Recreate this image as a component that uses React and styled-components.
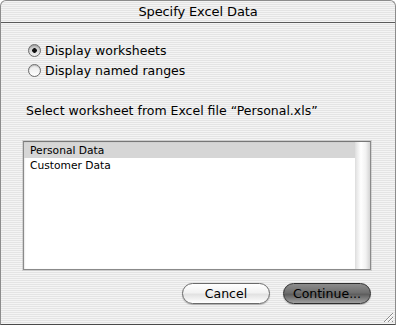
import React, { useState } from "react";
import styled, { createGlobalStyle } from "styled-components";

const GlobalStyle = createGlobalStyle`
  html, body {
    margin: 0;
    padding: 0;
    background: #ffffff;
  }
  * {
    box-sizing: border-box;
  }
`;

const sheets = ["Personal Data", "Customer Data"];

const App = () => {
  const [mode, setMode] = useState("worksheets");
  const [selected, setSelected] = useState(0);

  return (
    <>
      <GlobalStyle />
      <Window>
        <TitleBar>Specify Excel Data</TitleBar>
        <Body>
          <RadioGroup>
            <RadioRow onClick={() => setMode("worksheets")}>
              <Radio checked={mode === "worksheets"} />
              Display worksheets
            </RadioRow>
            <RadioRow onClick={() => setMode("ranges")}>
              <Radio checked={mode === "ranges"} />
              Display named ranges
            </RadioRow>
          </RadioGroup>
          <Prompt>Select worksheet from Excel file “Personal.xls”</Prompt>
          <ListBox>
            <Rows>
              {sheets.map((name, i) => (
                <Row key={name} active={i === selected} onClick={() => setSelected(i)}>
                  {name}
                </Row>
              ))}
            </Rows>
            <ScrollTrack />
          </ListBox>
          <Buttons>
            <Button>Cancel</Button>
            <Button primary>Continue...</Button>
          </Buttons>
        </Body>
        <Footer>
          <Grip width="13" height="13" viewBox="0 0 13 13">
            <path d="M12 3 L3 12 M12 7 L7 12 M12 11 L11 12" stroke="#8a8a8a" strokeWidth="1" />
            <path d="M12 4 L4 12 M12 8 L8 12" stroke="#ffffff" strokeWidth="1" />
          </Grip>
        </Footer>
      </Window>
    </>
  );
};

const Window = styled.div`
  width: 396px;
  height: 325px;
  display: flex;
  flex-direction: column;
  border: 1px solid #8c8c8c;
  border-bottom-color: #4a4a4a;
  border-radius: 6px 6px 0 0;
  overflow: hidden;
  font-family: "DejaVu Sans", "Liberation Sans", sans-serif;
  color: #000;
  background: repeating-linear-gradient(
    to bottom,
    #f4f4f4 0px,
    #f4f4f4 1px,
    #e4e4e4 1px,
    #e4e4e4 2px
  );
`;

const TitleBar = styled.div`
  height: 22px;
  flex: none;
  display: flex;
  align-items: center;
  justify-content: center;
  font-size: 13px;
  border-bottom: 1px solid #5a5a5a;
  letter-spacing: -0.1px;
`;

const Body = styled.div`
  flex: 1;
  display: flex;
  flex-direction: column;
  padding: 20px 24px 0 22px;
`;

const RadioGroup = styled.div`
  display: flex;
  flex-direction: column;
  gap: 6px;
  padding-left: 5px;
`;

const RadioRow = styled.label`
  display: flex;
  align-items: center;
  gap: 4px;
  font-size: 12.5px;
  height: 14px;
  cursor: default;
`;

const Radio = styled.span`
  width: 13px;
  height: 13px;
  border-radius: 50%;
  border: 1px solid #6d6d6d;
  background: ${({ checked }) =>
    checked
      ? "radial-gradient(circle at 50% 50%, #111 0 2px, transparent 2.6px), linear-gradient(#bdbdbd, #f2f2f2)"
      : "linear-gradient(#e8e8e8, #ffffff)"};
  box-shadow: inset 0 1px 1px rgba(0, 0, 0, 0.2);
`;

const Prompt = styled.div`
  margin-top: 26px;
  padding-left: 3px;
  font-size: 12.5px;
  height: 16px;
  line-height: 16px;
`;

const ListBox = styled.div`
  margin-top: 22px;
  height: 129px;
  display: flex;
  border: 1px solid #8a8a8a;
  border-top-color: #777;
  background: #fff;
  box-shadow: inset 0 1px 2px rgba(0, 0, 0, 0.25), 0 0 0 1px rgba(160, 160, 160, 0.35);
`;

const Rows = styled.div`
  flex: 1;
  display: flex;
  flex-direction: column;
  padding-top: 1px;
`;

const Row = styled.div`
  height: 15px;
  line-height: 15px;
  padding-left: 6px;
  font-size: 10.7px;
  background: ${({ active }) => (active ? "#d6d6d6" : "transparent")};
`;

const ScrollTrack = styled.div`
  width: 15px;
  flex: none;
  background: linear-gradient(to right, #e4e4e4, #ffffff 35%, #f2f2f2 70%, #d4d4d4);
  border-left: 1px solid #e0e0e0;
`;

const Buttons = styled.div`
  margin-top: 13px;
  display: flex;
  justify-content: flex-end;
  gap: 13px;
`;

const Button = styled.button`
  width: 88px;
  height: 21px;
  border-radius: 11px;
  font-family: "DejaVu Sans", "Liberation Sans", sans-serif;
  font-size: 12.5px;
  color: #000;
  padding: 0;
  border: 1px solid ${({ primary }) => (primary ? "#2e2e2e" : "#6a6a6a")};
  background: ${({ primary }) =>
    primary
      ? "linear-gradient(to bottom, #8c8c8c 0%, #6e6e6e 45%, #5e5e5e 55%, #a0a0a0 100%)"
      : "linear-gradient(to bottom, #ffffff 0%, #f2f2f2 45%, #e2e2e2 55%, #ffffff 100%)"};
  box-shadow: 0 1px 1px rgba(0, 0, 0, 0.25);
`;

const Footer = styled.div`
  flex: 1;
  display: flex;
  justify-content: flex-end;
  align-items: flex-end;
  padding: 0 1px 1px 0;
`;

const Grip = styled.svg`
  display: block;
`;

export default App;
